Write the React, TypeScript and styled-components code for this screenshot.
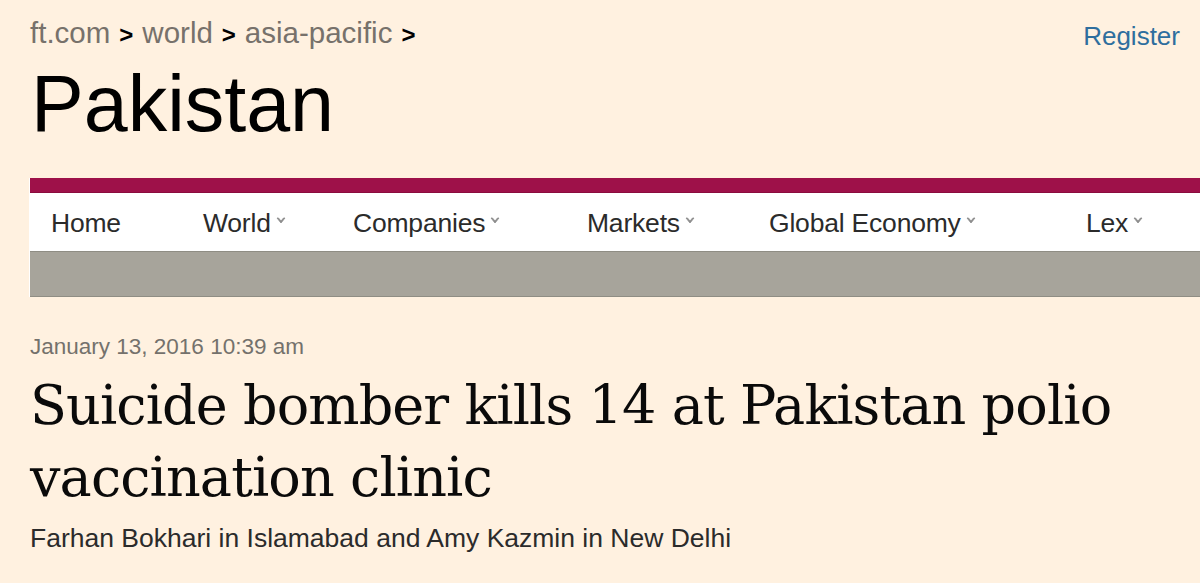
import React from "react";
import styled, { createGlobalStyle } from "styled-components";

const Global = createGlobalStyle`
  html, body { margin: 0; padding: 0; background: #fff1e0; }
  body { font-family: "Liberation Sans", Arial, sans-serif; overflow: hidden; }
`;

const Page = styled.div`
  width: 1200px;
  height: 583px;
  background: #fff1e0;
  padding-left: 30px;
  box-sizing: border-box;
  overflow: hidden;
`;

const TopRow = styled.div`
  display: flex;
  justify-content: space-between;
  align-items: flex-start;
  padding-top: 16px;
  padding-right: 20px;
`;

const Crumbs = styled.div`
  display: flex;
  align-items: baseline;
  gap: 9px;
  font-size: 29.5px;
  line-height: 34px;
  color: #77716b;
`;

const Sep = styled.span`
  color: #000;
  font-weight: bold;
  font-size: 24px;
`;

const Register = styled.a`
  color: #2e6e9e;
  font-size: 26px;
  line-height: 34px;
  margin-top: 3px;
  text-decoration: none;
`;

const Title = styled.h1`
  margin: 0;
  margin-top: 6px;
  font-weight: normal;
  font-size: 79px;
  line-height: 90px;
  color: #000;
  margin-left: 1px;
`;

const Nav = styled.nav`
  margin-top: 29px;
  border-left: 1px solid #fff;
  margin-left: -1px;
`;

const Accent = styled.div`
  height: 14px;
  background: #9e1149;
  border-bottom: 1px solid #8a0c3e;
`;

const Menu = styled.ul`
  list-style: none;
  margin: 0;
  padding: 3px 0 0;
  height: 59px;
  box-sizing: border-box;
  background: #fff;
  display: flex;
  align-items: center;
  border-bottom: 1px solid #8f8d84;
`;

const Item = styled.li<{ $w: number }>`
  width: ${(p) => p.$w}px;
  flex: none;
  display: flex;
  align-items: center;
  font-size: 26.5px;
  color: #2b2b2b;
  padding-left: 21px;
  box-sizing: border-box;
  letter-spacing: -0.2px;
`;

const Chev = styled.svg`
  margin-left: 5px;
  margin-top: -6px;
`;

const SubBar = styled.div`
  height: 44px;
  background: #a7a49b;
  border-bottom: 1px solid #8f8d84;
`;

const Date = styled.div`
  margin-top: 37px;
  font-size: 22.5px;
  line-height: 26px;
  color: #74716c;
`;

const Headline = styled.h2`
  margin: 0;
  margin-top: 10px;
  font-family: "DejaVu Serif", Georgia, serif;
  font-weight: normal;
  font-size: 54px;
  line-height: 72px;
  color: #0a0a0a;
  letter-spacing: -0.9px;
`;

const Byline = styled.div`
  margin-top: 9px;
  font-size: 26.5px;
  line-height: 30px;
  color: #2b2b2b;
`;

const Chevron = () => (
  <Chev width="10" height="7" viewBox="0 0 10 7">
    <path d="M1 1 L5 6 L9 1 L7.5 1 L5 4 L2.5 1 Z" fill="#8c8c8c" stroke="#8c8c8c" strokeWidth="0.8" />
  </Chev>
);

const items: { label: string; w: number; chev: boolean }[] = [
  { label: "Home", w: 152, chev: false },
  { label: "World", w: 150, chev: true },
  { label: "Companies", w: 234, chev: true },
  { label: "Markets", w: 182, chev: true },
  { label: "Global Economy", w: 317, chev: true },
  { label: "Lex", w: 150, chev: true },
];

export default function App() {
  return (
    <Page>
      <Global />
      <TopRow>
        <Crumbs>
          <span>ft.com</span>
          <Sep>&gt;</Sep>
          <span>world</span>
          <Sep>&gt;</Sep>
          <span>asia-pacific</span>
          <Sep>&gt;</Sep>
        </Crumbs>
        <Register href="#">Register</Register>
      </TopRow>
      <Title>Pakistan</Title>
      <Nav>
        <Accent />
        <Menu>
          {items.map((it) => (
            <Item key={it.label} $w={it.w}>
              {it.label}
              {it.chev && <Chevron />}
            </Item>
          ))}
        </Menu>
        <SubBar />
      </Nav>
      <Date>January 13, 2016 10:39 am</Date>
      <Headline>
        Suicide bomber kills 14 at Pakistan polio
        <br />
        vaccination clinic
      </Headline>
      <Byline>Farhan Bokhari in Islamabad and Amy Kazmin in New Delhi</Byline>
    </Page>
  );
}
